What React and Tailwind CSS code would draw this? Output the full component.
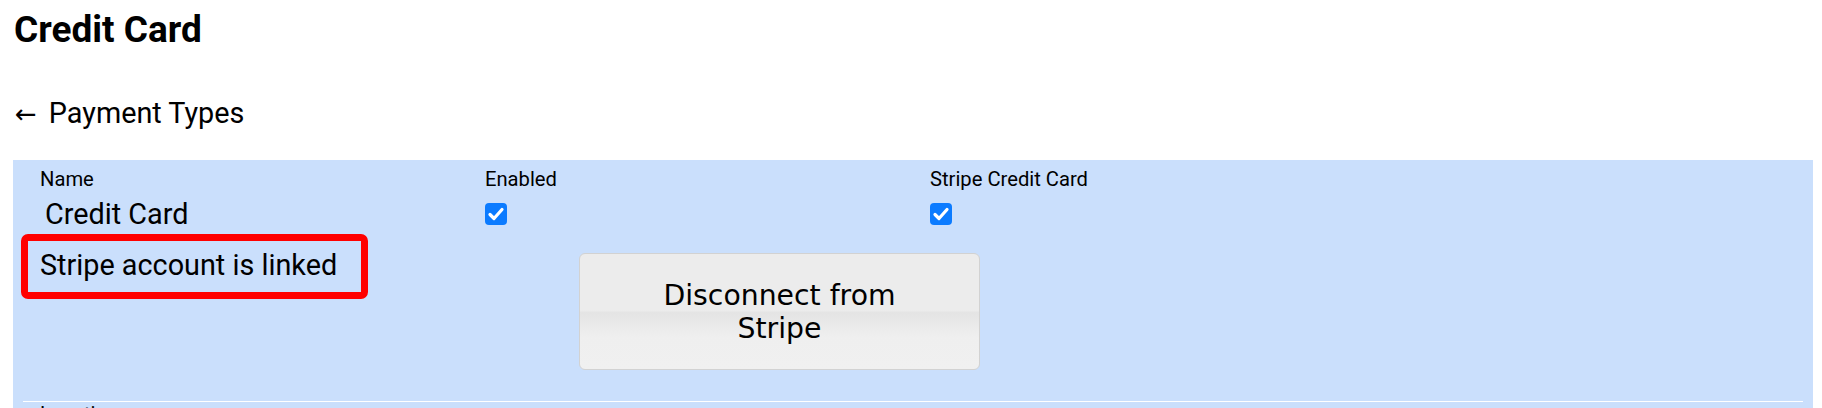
import React from "react";

function Check() {
  return (
    <div className="w-[22px] h-[22px] rounded-[4px] bg-[#0b7bff] flex items-center justify-center">
      <svg width="22" height="22" viewBox="0 0 22 22" fill="none">
        <path d="M5 11.5 L9 15.5 L17 6.5" stroke="white" strokeWidth="3.2" strokeLinecap="round" strokeLinejoin="round" />
      </svg>
    </div>
  );
}

export default function App() {
  return (
    <div className="min-h-screen bg-white text-black font-['Roboto','Liberation_Sans',sans-serif] pl-[13px]">
      <h1 className="text-[37px] font-bold leading-[normal] pt-[8px] pl-[1px]">Credit Card</h1>
      <div className="text-[28.8px] leading-[normal] mt-[45px] pl-[2px] flex items-baseline">
        <span className="font-['DejaVu_Sans',sans-serif] text-[26px] mr-[12px]">←</span>
        <span>Payment Types</span>
      </div>
      <div className="mt-[30px] w-[1800px] bg-[#cadffc] px-[10px] pt-[7px] overflow-hidden h-[260px]">
        <div className="grid grid-cols-[repeat(4,445px)] text-[20.2px] leading-[normal]">
          <div className="pl-[17px]">Name</div>
          <div className="pl-[17px]">Enabled</div>
          <div className="pl-[17px]">Stripe Credit Card</div>
          <div />
        </div>
        <div className="grid grid-cols-[repeat(4,445px)] items-center h-[33px] mt-[6px]">
          <div className="pl-[22px] text-[28.8px] leading-[normal]">Credit Card</div>
          <div className="pl-[17px]"><Check /></div>
          <div className="pl-[17px]"><Check /></div>
          <div />
        </div>
        <div className="relative grid grid-cols-[repeat(4,445px)] items-start pb-[31px]">
          <div className="pl-[17px] mt-[18px] text-[28.8px] leading-[normal]">Stripe account is linked</div>
          <div className="col-span-2 pl-[111px] mt-[23px]">
            <button className="w-[401px] h-[117px] border border-[#d2d2d2] rounded-[6px] px-[60px] text-center text-[28.3px] leading-[normal] text-black font-['DejaVu_Sans',sans-serif] bg-[linear-gradient(to_bottom,#ececec_0%,#ececec_49%,#e4e4e4_51%,#efefef_72%,#f0f0f0_100%)]">
              Disconnect from Stripe
            </button>
          </div>
          <div className="absolute left-[-2px] top-[4px] w-[347px] h-[65px] border-[7px] border-[#ff0000] rounded-[7px]" />
        </div>
        <div className="w-[1780px] h-px bg-white" />
        <div className="grid grid-cols-[repeat(4,445px)] text-[20.2px] leading-[normal]">
          <div className="pl-[17px]">Location</div>
        </div>
      </div>
    </div>
  );
}
